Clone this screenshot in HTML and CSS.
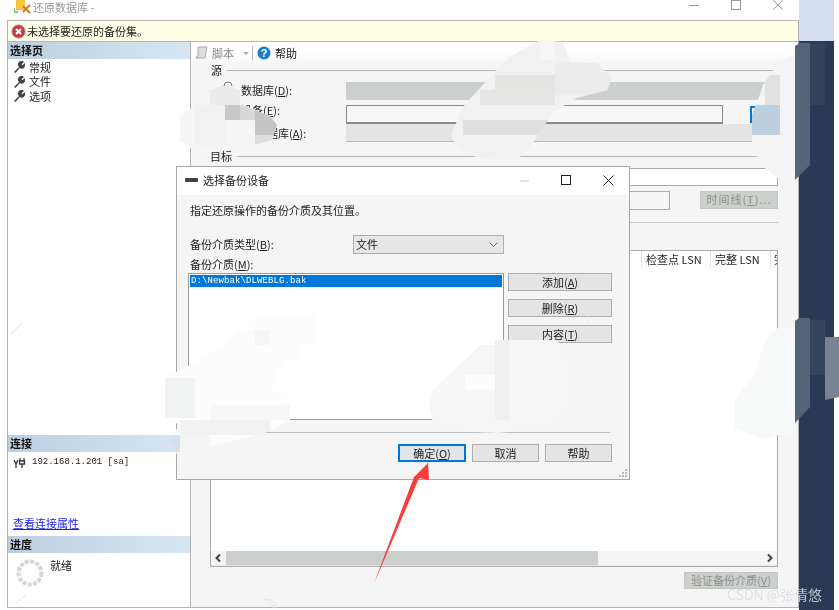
FILE: index.html
```html
<!DOCTYPE html>
<html lang="zh-CN">
<head>
    <meta charset="UTF-8">
    <title>还原数据库</title>
    <link rel="stylesheet" href="styles.css">
</head>
<body>

<div class="window">
    <div class="titlebar">
        <svg class="app-icon" width="18" height="14" viewBox="0 0 18 14">
            <rect x="2" y="0" width="9" height="10" fill="#f5c63a"/>
            <path d="M0 8v4h4" fill="none" stroke="#5cb85c" stroke-width="1.5"/>
            <path d="M9 6l7 7M16 5l-7 7" stroke="#e0762a" stroke-width="2"/>
        </svg>
        <span class="app-title">还原数据库 -</span>
        <div class="win-controls">
            <svg width="10" height="10" viewBox="0 0 10 10"><path d="M0 5.5h10" stroke="#999"/></svg>
            <svg width="10" height="10" viewBox="0 0 10 10"><rect x=".5" y=".5" width="9" height="9" fill="none" stroke="#999"/></svg>
            <svg width="10" height="10" viewBox="0 0 10 10"><path d="M0 0l10 10M10 0L0 10" stroke="#999"/></svg>
        </div>
    </div>

    <div class="frame">
        <div class="notice">
            <svg width="15" height="15" viewBox="0 0 15 15">
                <circle cx="7.5" cy="7.5" r="6.5" fill="#d8343a" stroke="#888"/>
                <path d="M5 5l5 5M10 5l-5 5" stroke="#fff" stroke-width="2"/>
            </svg>
            <span>未选择要还原的备份集。</span>
        </div>

        <div class="panes">
            <aside class="sidebar">
                <div class="side-head">选择页</div>
                <ul class="pages">
                    <li><svg class="wrench" viewBox="0 0 12 12"><path d="M1 11l5-5a3.500 3.500 0 0 1 5-5L8.500 3.200l1 1L11.500 2a3.500 3.500 0 0 1-4.700 5L2.500 12z" fill="#444"/></svg>常规</li>
                    <li><svg class="wrench" viewBox="0 0 12 12"><path d="M1 11l5-5a3.500 3.500 0 0 1 5-5L8.500 3.200l1 1L11.500 2a3.500 3.500 0 0 1-4.700 5L2.500 12z" fill="#444"/></svg>文件</li>
                    <li><svg class="wrench" viewBox="0 0 12 12"><path d="M1 11l5-5a3.500 3.500 0 0 1 5-5L8.500 3.200l1 1L11.500 2a3.500 3.500 0 0 1-4.700 5L2.500 12z" fill="#444"/></svg>选项</li>
                </ul>
                <div class="side-head">连接</div>
                <div class="conn">
                    <div class="conn-server">
                        <svg width="13" height="12" viewBox="0 0 13 12"><path d="M1 3l2 4 2-4M3 7v4M7 1v3M11 1v3M6.500 4h5v3h-5zM9 7v4" fill="none" stroke="#333" stroke-width="1.300"/></svg>
                        <span>192.168.1.201 [sa]</span>
                    </div>
                    <a class="conn-link">查看连接属性</a>
                </div>
                <div class="side-head">进度</div>
                <div class="progress">
                    <svg width="28" height="28" viewBox="0 0 28 28"><circle cx="14" cy="14" r="11.500" fill="none" stroke="#d6d6d6" stroke-width="4" stroke-dasharray="4 1.400"/></svg>
                    <span>就绪</span>
                </div>
            </aside>

            <main class="main">
                <div class="toolbar">
                    <svg width="13" height="14" viewBox="0 0 13 14"><path d="M3 1h9L10 12H1l1-2h1z" fill="#ddd" stroke="#aaa"/></svg>
                    <span class="muted">脚本</span>
                    <span class="tool-caret"></span>
                    <span class="tool-sep"></span>
                    <svg width="14" height="14" viewBox="0 0 14 14"><circle cx="7" cy="7" r="6.500" fill="#1a7fc4"/><text x="7" y="11" text-anchor="middle" class="help-mark">?</text></svg>
                    <span>帮助</span>
                </div>

                <div class="content">
                    <div class="legend legend-src"><span>源</span></div>
                    <div class="row row-db">
                        <label>数据库(<u>D</u>):</label>
                        <div class="field field-off"></div>
                    </div>
                    <div class="row row-device">
                        <label>设备(<u>E</u>):</label>
                        <div class="field field-input"></div>
                        <div class="browse"></div>
                    </div>
                    <div class="row row-srcdb">
                        <label class="label-deep">数据库(<u>A</u>):</label>
                        <div class="field field-light"></div>
                    </div>

                    <div class="legend legend-dst"><span>目标</span></div>
                    <div class="row row-dstdb">
                        <label></label>
                        <div class="field field-combo"></div>
                    </div>
                    <div class="row row-time">
                        <label></label>
                        <div class="field field-restore"></div>
                        <button class="btn-off btn-time">时间线(<u>T</u>)...</button>
                    </div>
                    <div class="rule"></div>

                    <div class="table">
                        <div class="thead">
                            <div class="th th-first">LSN</div>
                            <div class="th th-ckpt">检查点 LSN</div>
                            <div class="th th-full">完整 LSN</div>
                            <div class="th th-last">完</div>
                        </div>
                        <div class="tbody"></div>
                        <div class="hscroll">
                            <svg class="arrow-btn" viewBox="0 0 15 14"><path d="M9 3.500L5.500 7 9 10.500" fill="none" stroke="#444" stroke-width="2"/></svg>
                            <div class="thumb"></div>
                            <svg class="arrow-btn" viewBox="0 0 15 14"><path d="M6 3.500L9.500 7 6 10.500" fill="none" stroke="#444" stroke-width="2"/></svg>
                        </div>
                    </div>

                    <div class="verify">
                        <button class="btn-off btn-verify">验证备份介质(<u>V</u>)</button>
                    </div>
                </div>
            </main>
        </div>
    </div>
</div>
<div class="strip">
    <div class="strip-top"></div>
</div>

<div class="dialog">
    <div class="dlg-title">
        <svg width="13" height="6" viewBox="0 0 13 6"><rect y="1" width="13" height="4" rx="1" fill="#444"/></svg>
        <span>选择备份设备</span>
        <div class="dlg-controls">
            <svg width="11" height="11" viewBox="0 0 11 11"><path d="M1 6h9" stroke="#ccc"/></svg>
            <svg width="11" height="11" viewBox="0 0 11 11"><rect x=".5" y=".5" width="9" height="9" fill="none" stroke="#222"/></svg>
            <svg width="11" height="11" viewBox="0 0 11 11"><path d="M.5.5l10 10M10.500.5l-10 10" stroke="#222"/></svg>
        </div>
    </div>
    <div class="dlg-body">
        <p class="dlg-desc">指定还原操作的备份介质及其位置。</p>
        <div class="dlg-type">
            <label>备份介质类型(<u>B</u>):</label>
            <div class="dlg-combo">文件<svg width="9" height="5" viewBox="0 0 9 5"><path d="M.5.500l4 4 4-4" fill="none" stroke="#666"/></svg></div>
        </div>
        <label class="dlg-media-label">备份介质(<u>M</u>):</label>
        <div class="dlg-media">
            <div class="media-list">
                <div class="media-item">D:\Newbak\DLWEBLG.bak</div>
            </div>
            <div class="media-btns">
                <button class="btn">添加(<u>A</u>)</button>
                <button class="btn">删除(<u>R</u>)</button>
                <button class="btn">内容(<u>T</u>)</button>
            </div>
        </div>
        <div class="dlg-rule"></div>
        <div class="dlg-foot">
            <button class="btn btn-default">确定(<u>O</u>)</button>
            <button class="btn">取消</button>
            <button class="btn">帮助</button>
        </div>
    </div>
    <svg class="grip" width="9" height="9" viewBox="0 0 9 9"><path d="M6 0h2v2H6zM3 3h2v2H3zM6 3h2v2H6zM0 6h2v2H0zM3 6h2v2H3zM6 6h2v2H6z" fill="#bbb"/></svg>
</div>

<!-- mosaic smudges and the red arrow lie over everything -->
<svg class="overlay" width="839" height="610" viewBox="0 0 839 610">
    <defs>
        <clipPath id="b1"><path d="M180 117l15-12h15V90l15-5 15 5 3 15 12 5 15 6 7 9-5 15-17 5-65 3-10-8z"/></clipPath>
        <clipPath id="b2"><path d="M451 135l12-28 15-17 20-22 12-11 30-17 23 2 7 20 27 1 15 15-5 12-30 8-24 14-20 31-16 17-39-2-21-10z"/></clipPath>
        <clipPath id="b3"><path d="M790 56l-12 7-15 22-5 15-6 15v35l13 18 13 10h17V56z"/></clipPath>
        <clipPath id="b4"><path d="M255 315h60v28h-15v15l-17 2-13 28 20 17v15l-3 2-20 10-57 15-30 11-13-18 13-15-15-7v-40l30-16 30-17 15-15h15z"/></clipPath>
        <clipPath id="b5"><path d="M495 340h62l11 17v50l-15 20-55 6-45-2-20-8-4-16 4-17 15-15 17-15 15-15h15z"/></clipPath>
    </defs>

    <g clip-path="url(#b1)">
        <rect x="180" y="85" width="100" height="65" fill="#f5f5f5"/>
        <rect x="195" y="105" width="30" height="40" fill="#f1f1f1"/>
        <rect x="210" y="85" width="30" height="20" fill="#ebebeb"/>
        <rect x="225" y="105" width="15" height="15" fill="#c8c8c8"/>
        <rect x="240" y="105" width="15" height="15" fill="#d8d8d8"/>
        <rect x="255" y="110" width="22" height="25" fill="#c4c4c4"/>
        <rect x="255" y="135" width="22" height="12" fill="#dedede"/>
    </g>

    <g clip-path="url(#b2)">
        <rect x="440" y="35" width="180" height="135" fill="#f1f1f1"/>
        <rect x="540" y="40" width="15" height="20" fill="#f6f6f6"/>
        <rect x="555" y="63" width="60" height="32" fill="#ececec"/>
        <rect x="495" y="75" width="60" height="15" fill="#e4e5e3"/>
        <rect x="480" y="90" width="75" height="15" fill="#e5e6e4"/>
        <rect x="463" y="120" width="87" height="15" fill="#dfdfdf"/>
    </g>

    <g clip-path="url(#b3)">
        <rect x="750" y="50" width="50" height="130" fill="#f4f4f4"/>
        <rect x="752" y="105" width="28" height="30" fill="#bcd0e2"/>
        <rect x="765" y="75" width="15" height="30" fill="#e2e3e1"/>
    </g>
    <path d="M795 46l5-3h10v122l-15 15z" fill="#56647a"/>
    <path d="M810 43h15v62h-15z" fill="#33435c"/>

    <g clip-path="url(#b4)">
        <rect x="160" y="310" width="160" height="150" fill="#fcfcfc"/>
        <rect x="165" y="378" width="30" height="40" fill="#f1f2f2"/>
        <rect x="210" y="405" width="80" height="15" fill="#f6f7f7"/>
        <rect x="180" y="420" width="90" height="15" fill="#f2f2f2"/>
        <rect x="255" y="330" width="15" height="15" fill="#f6f6f6"/>
        <rect x="165" y="435" width="45" height="25" fill="#f5f5f5"/>
        <rect x="165" y="435" width="15" height="17" fill="#d4e1ec"/>
    </g>
    <g clip-path="url(#b5)">
        <rect x="425" y="335" width="150" height="105" fill="#f6f6f6"/>
        <rect x="495" y="340" width="15" height="80" fill="#f0f0f0"/>
        <rect x="465" y="375" width="30" height="15" fill="#fcfcfc"/>
    </g>

    <path d="M778 328l-13 12-10 33-20 27v28l30 12 13-5h17V328z" fill="#f7f8f8"/>
    <path d="M795 321l4-3h11v89l-15 16z" fill="#56647a"/>
    <path d="M810 320h15v55h-15z" fill="#35455d"/>
    <path d="M825 337h14v60l-14 3z" fill="#788393"/>

    <path d="M224 86a4 4 0 0 1 8 0" fill="none" stroke="#777"/>
    <g fill="none" stroke="#e4e4e4">
        <path d="M264 600a9 9 0 0 1 12 8M268 604a4 4 0 0 1 5 4"/>
        <path d="M10 335l12-12M16 603l10-8"/>
        <path d="M580 310a10 10 0 0 1 8 14" stroke="#e9e9e9"/>
    </g>

    <path d="M374.500 582L414 477l14-14 1 17-10-2-40 94z" fill="#fb3b3b"/>
</svg>

<div class="credit">CSDN @张清悠</div>

</body>
</html>
```
FILE: styles.css
```css
* {
    box-sizing: border-box;
}
html, body {
    margin: 0;
    height: 610px;
    overflow: hidden;
}
body {
    width: 839px;
    background-color: #fff;
    color: #222;
    font-family: "Noto Sans CJK SC", "Liberation Sans", sans-serif;
    font-size: 11px;
    line-height: 13px;
    display: flex;
    position: relative;
}
button {
    font: inherit;
    padding: 0;
}
label {
    white-space: nowrap;
}
.window {
    width: 799px;
    flex: none;
    filter: blur(.3px);
}
.titlebar {
    height: 20px;
    position: relative;
}
.app-icon {
    position: absolute;
    left: 14px;
    top: 0;
}
.app-title {
    position: absolute;
    left: 33px;
    top: 1px;
    font-size: 11px;
    color: #999;
}
.win-controls {
    position: absolute;
    right: 16px;
    top: 0;
    display: flex;
    gap: 32px;
}
.frame {
    margin-left: 7px;
    height: 588px;
    border: 1px solid #b4b4b4;
    border-top: none;
    display: flex;
    flex-direction: column;
}
.notice {
    height: 22px;
    background-color: #ffffe6;
    border-top: 1px solid #b8b8b8;
    border-bottom: 1px solid #b8b8b8;
    display: flex;
    align-items: center;
    gap: 1px;
    padding-left: 3px;
}
.panes {
    flex: 1;
    display: flex;
    min-height: 0;
}
.sidebar {
    width: 183px;
    border-right: 1px solid #b4b4b4;
    display: flex;
    flex-direction: column;
}
.side-head {
    height: 17px;
    padding: 2px 2px 0;
    font-weight: 700;
    color: #111;
    background: linear-gradient(to right, #bccfe0, #d6e6f4);
}
.pages {
    list-style: none;
    margin: 0;
    padding: 1px 0 0 5px;
    flex: 1;
}
.pages li {
    height: 14.5px;
    display: flex;
    align-items: center;
    gap: 4px;
}
.wrench {
    width: 12px;
    height: 12px;
}
.conn {
    height: 84px;
    display: flex;
    flex-direction: column;
    justify-content: space-between;
    padding: 4px 0 6px 5px;
}
.conn-server {
    display: flex;
    align-items: center;
    gap: 6px;
    font-family: "Liberation Mono", monospace;
    font-size: 9px;
}
.conn-link {
    color: #1a1aee;
    text-decoration: underline;
}
.progress {
    height: 54px;
    position: relative;
    display: flex;
    gap: 6px;
    padding: 6px 0 0 8px;
}
.main {
    flex: 1;
    background-color: #f5f5f5;
    min-width: 0;
}
.toolbar {
    height: 22px;
    display: flex;
    align-items: center;
    gap: 4px;
    padding-left: 4px;
    background: linear-gradient(to bottom, #fff, #fff 10px, #f5f5f5);
}
.muted {
    color: #888;
}
.tool-caret {
    margin-left: 5px;
    border: 3px solid transparent;
    border-top-color: #aaa;
    margin-top: 3px;
}
.tool-sep {
    width: 1px;
    height: 14px;
    background-color: #bbb;
    margin: 0 0 0 -1px;
}
.help-mark {
    font-family: "Liberation Sans", sans-serif;
    font-size: 11px;
    font-weight: 700;
    fill: #fff;
}
.content {
    padding: 0 20px 0 19px;
}
.legend {
    display: flex;
    align-items: center;
    gap: 5px;
    height: 13px;
    padding-left: 1px;
}
.legend::after {
    content: "";
    flex: 1;
    height: 1px;
    background-color: #b4b4b4;
}
.row {
    display: flex;
    align-items: center;
}
.row label {
    width: 136px;
    padding-left: 31px;
    flex: none;
}
.row .label-deep {
    padding-left: 46px;
}
.row-device label {
    padding-bottom: 8px;
}
.row-db label {
    padding-bottom: 2px;
}
.field {
    flex: 1;
    height: 100%;
}
.field-off {
    background-color: #ccd0cc;
}
.field-input {
    flex: none;
    width: 377px;
    background-color: #f7f7f7;
    border: 1px solid #8a8a8a;
    border-bottom-width: 2px;
}
.field-light {
    background-color: #e4e4e4;
    border-bottom: 1px solid #bbb;
}
.field-combo {
    background-color: #fff;
    border: 1px solid #aaa;
}
.field-restore {
    flex: none;
    width: 324px;
    height: 19px;
    border: 1px solid #aaa;
}
.browse {
    margin-left: auto;
    width: 28px;
    height: 17px;
    border: 2px solid #0078d7;
    background-color: #eee;
}
.row-db {
    height: 18px;
    margin-top: 5px;
}
.row-device {
    height: 19px;
    margin-top: 5px;
}
.row-srcdb {
    height: 18px;
}
.legend-dst {
    margin-top: 8px;
    padding-left: 0;
}
.row-dstdb {
    height: 18px;
    margin-top: 5px;
}
.row-time {
    height: 20px;
    margin-top: 4px;
}
.btn-off {
    background-color: #ccd0cc;
    border: 1px solid #c2c6c2;
    color: #8e908e;
}
.btn-time {
    width: 78px;
    height: 18px;
    margin-left: auto;
    margin-top: -1px;
    letter-spacing: 1px;
}
.rule {
    height: 1px;
    margin-top: 12px;
    background-color: #c8c8c8;
}
.table {
    height: 317px;
    margin-top: 27px;
    background-color: #fff;
    border: 1px solid #aaa;
    display: flex;
    flex-direction: column;
}
.thead {
    height: 17px;
    display: flex;
    overflow: hidden;
    flex: none;
}
.th {
    flex: none;
    padding: 2px 0 0 4px;
    border-right: 1px solid #e2e2e2;
    white-space: nowrap;
}
.th-first {
    width: 431px;
    padding-right: 10px;
    text-align: right;
}
.th-ckpt {
    width: 69px;
}
.th-full {
    width: 60px;
}
.th-last {
    border-right: none;
    padding-left: 3px;
}
.tbody {
    flex: 1;
}
.hscroll {
    height: 15px;
    background-color: #f5f5f5;
    display: flex;
    align-items: center;
    flex: none;
    border-bottom: 1px solid #e6e6e6;
}
.arrow-btn {
    width: 15px;
    height: 14px;
    flex: none;
}
.thumb {
    width: 372px;
    height: 14px;
    background-color: #ccd0cc;
    margin-right: auto;
}
.verify {
    display: flex;
    justify-content: flex-end;
    margin-top: 5px;
}
.btn-verify {
    width: 94px;
    height: 17px;
}
.strip {
    width: 35px;
    flex: none;
    background-color: #2a3a55;
}
.strip-top {
    height: 41px;
    background-color: #d6dcf0;
}
.dialog {
    position: absolute;
    left: 176px;
    top: 166px;
    width: 454px;
    height: 314px;
    background-color: #f5f5f5;
    border: 1px solid #a8a8a8;
    display: flex;
    flex-direction: column;
    filter: blur(.3px);
}
.dlg-title {
    height: 28px;
    background-color: #fff;
    display: flex;
    align-items: center;
    gap: 5px;
    padding: 0 0 2px 8px;
    flex: none;
}
.dlg-controls {
    margin-left: auto;
    margin-right: 15px;
    display: flex;
    gap: 31px;
}
.dlg-body {
    flex: 1;
    padding: 9px 17px 0 13px;
    display: flex;
    flex-direction: column;
}
.dlg-desc {
    margin: 0;
    height: 13px;
}
.dlg-type {
    display: flex;
    align-items: center;
    margin-top: 18px;
    height: 19px;
}
.dlg-type label {
    width: 163px;
}
.dlg-combo {
    width: 151px;
    height: 19px;
    background-color: #e6e6e6;
    border: 1px solid #adadad;
    display: flex;
    align-items: center;
    justify-content: space-between;
    padding: 0 5px 0 2px;
}
.dlg-media-label {
    margin-top: 4px;
    height: 15px;
    display: block;
}
.dlg-media {
    display: flex;
    gap: 4px;
    height: 147px;
    margin-left: -2px;
}
.media-list {
    width: 316px;
    background-color: #fff;
    border: 1px solid #9a9a9a;
    padding: 1px;
}
.media-item {
    height: 12px;
    line-height: 12px;
    background-color: #0078d7;
    color: #fff;
    font-family: "Liberation Mono", monospace;
    font-size: 9px;
    letter-spacing: .1px;
    padding-left: 1px;
}
.media-btns {
    display: flex;
    flex-direction: column;
    gap: 8px;
}
.btn {
    width: 104px;
    height: 18px;
    background-color: #e4e4e4;
    border: 1px solid #adadad;
    color: #222;
}
.dlg-rule {
    height: 1px;
    margin-top: 12px;
    background-color: #bfbfbf;
    margin-right: 2px;
}
.dlg-foot {
    display: flex;
    justify-content: flex-end;
    gap: 6px;
    margin-top: 11px;
}
.dlg-foot .btn {
    width: 67px;
}
.dlg-foot .btn-default {
    width: 68px;
    border: 2px solid #0078d7;
}
.grip {
    position: absolute;
    right: 1px;
    bottom: 1px;
}
.overlay {
    position: absolute;
    left: 0;
    top: 0;
    pointer-events: none;
}
.credit {
    position: absolute;
    left: 727px;
    top: 587px;
    font-size: 14px;
    line-height: 14px;
    color: #d8dce4;
    opacity: .85;
}
```
